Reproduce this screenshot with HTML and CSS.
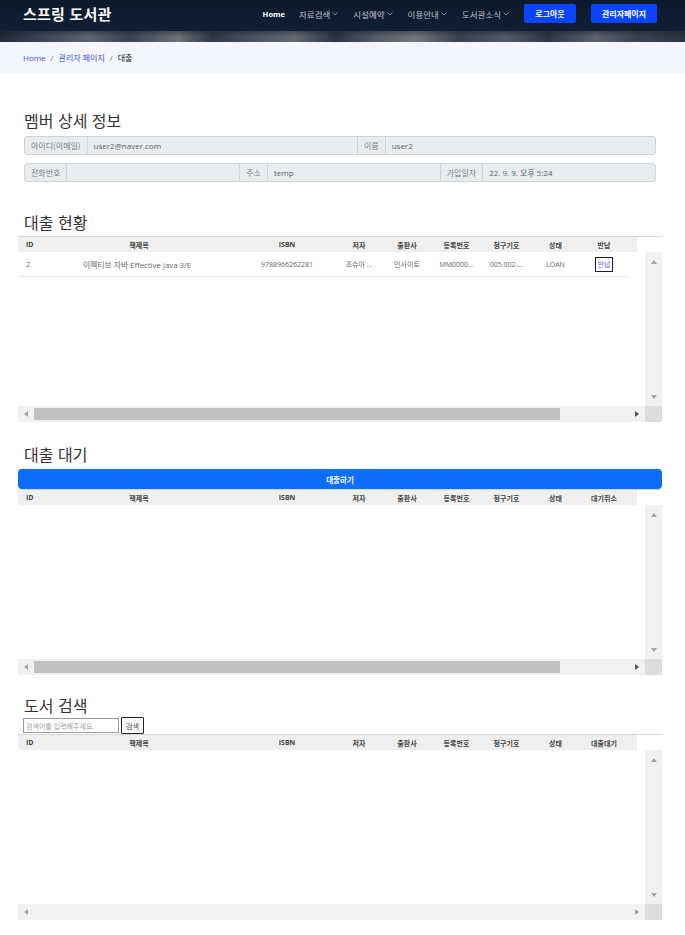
FILE: index.html
```html
<!DOCTYPE html>
<html lang="ko">
<head>
<meta charset="utf-8">
<title>스프링 도서관 - 대출</title>
<link rel="stylesheet" href="styles.css">
</head>
<body>
<header class="topbar">
  <div class="nav-main">
    <a class="logo" href="#">스프링 도서관</a>
    <nav class="menu">
      <a class="menu-item active" href="#">Home</a>
      <a class="menu-item" href="#">자료검색 <svg class="chev" viewBox="0 0 6 4"><polyline points="0.5,0.5 3,3 5.5,0.5"/></svg></a>
      <a class="menu-item" href="#">시설예약 <svg class="chev" viewBox="0 0 6 4"><polyline points="0.5,0.5 3,3 5.5,0.5"/></svg></a>
      <a class="menu-item" href="#">이용안내 <svg class="chev" viewBox="0 0 6 4"><polyline points="0.5,0.5 3,3 5.5,0.5"/></svg></a>
      <a class="menu-item" href="#">도서관소식 <svg class="chev" viewBox="0 0 6 4"><polyline points="0.5,0.5 3,3 5.5,0.5"/></svg></a>
      <a class="btn-nav btn-logout" href="#">로그아웃</a>
      <a class="btn-nav btn-admin" href="#">관리자페이지</a>
    </nav>
  </div>
  <div class="hero-strip"></div>
</header>

<section class="breadcrumbs">
  <a href="#">Home</a><span class="sep">/</span><a href="#">관리자 페이지</a><span class="sep">/</span><span class="current">대출</span>
</section>

<main class="content">
  <h2 class="sec-title">멤버 상세 정보</h2>
  <div class="igroup">
    <span class="ig-label">아이디(이메일)</span><span class="ig-value">user2@naver.com</span>
    <span class="ig-label">이름</span><span class="ig-value">user2</span>
  </div>
  <div class="igroup">
    <span class="ig-label">전화번호</span><span class="ig-value"></span>
    <span class="ig-label">주소</span><span class="ig-value">temp</span>
    <span class="ig-label">가입일자</span><span class="ig-value">22. 9. 9. 오후 5:24</span>
  </div>

  <h2 class="sec-title t-loan">대출 현황</h2>
  <div class="grid">
    <div class="grid-head">
      <div class="cols hrow">
        <span class="c-id">ID</span><span class="c-title">책제목</span><span class="c-isbn">ISBN</span><span>저자</span><span>출판사</span><span>등록번호</span><span>청구기호</span><span>상태</span><span>반납</span>
      </div>
    </div>
    <div class="grid-body">
      <div class="rows">
        <div class="cols brow">
          <span class="c-id">2</span><span class="c-title"><span class="clip">이펙티브 자바 Effective Java 3/E</span></span><span class="c-isbn">9788966262281</span><span>조슈아 ...</span><span>인사이트</span><span>MM0000...</span><span>005.002-...</span><span>LOAN</span><span><button class="btn-return">반납</button></span>
        </div>
      </div>
      <div class="vscroll"><span class="arr up"></span><span class="arr down"></span></div>
    </div>
    <div class="hscroll">
      <span class="harr"><span class="arr left"></span></span>
      <div class="track"><div class="thumb"></div></div>
      <span class="harr"><span class="arr right dark"></span></span>
      <span class="corner"></span>
    </div>
  </div>

  <h2 class="sec-title t-wait">대출 대기</h2>
  <button class="btn-loan">대출하기</button>
  <div class="grid">
    <div class="grid-head">
      <div class="cols hrow">
        <span class="c-id">ID</span><span class="c-title">책제목</span><span class="c-isbn">ISBN</span><span>저자</span><span>출판사</span><span>등록번호</span><span>청구기호</span><span>상태</span><span>대기취소</span>
      </div>
    </div>
    <div class="grid-body">
      <div class="rows"></div>
      <div class="vscroll"><span class="arr up"></span><span class="arr down"></span></div>
    </div>
    <div class="hscroll">
      <span class="harr"><span class="arr left"></span></span>
      <div class="track"><div class="thumb"></div></div>
      <span class="harr"><span class="arr right dark"></span></span>
      <span class="corner"></span>
    </div>
  </div>

  <h2 class="sec-title t-search">도서 검색</h2>
  <form class="search-row">
    <input class="search-input" type="text" placeholder="검색어를 입력해주세요.">
    <button class="search-btn" type="button">검색</button>
  </form>
  <div class="grid">
    <div class="grid-head">
      <div class="cols hrow">
        <span class="c-id">ID</span><span class="c-title">책제목</span><span class="c-isbn">ISBN</span><span>저자</span><span>출판사</span><span>등록번호</span><span>청구기호</span><span>상태</span><span>대출대기</span>
      </div>
    </div>
    <div class="grid-body">
      <div class="rows"></div>
      <div class="vscroll"><span class="arr up"></span><span class="arr down"></span></div>
    </div>
    <div class="hscroll">
      <span class="harr"><span class="arr left"></span></span>
      <div class="track"></div>
      <span class="harr"><span class="arr right"></span></span>
      <span class="corner"></span>
    </div>
  </div>
</main>
</body>
</html>
```

FILE: styles.css
```css
* { box-sizing: border-box; }

body {
  margin: 0;
  background: #fff;
  color: #444;
  font-family: "Open Sans", "Noto Sans CJK KR", sans-serif;
}

a { text-decoration: none; }

/* ---------- header ---------- */
.topbar {
  background: linear-gradient(180deg, #0d1a2c 0%, #11203a 100%);
}

.nav-main {
  height: 31px;
  padding: 0 28px 4px 23px;
  display: flex;
  align-items: center;
}

.logo {
  color: #fff;
  font-family: "Noto Sans CJK KR", sans-serif;
  font-weight: 700;
  font-size: 15px;
  letter-spacing: 0.2px;
}

.menu {
  margin-left: auto;
  display: flex;
  align-items: center;
}

.menu-item {
  display: flex;
  align-items: center;
  gap: 2px;
  margin-right: 15px;
  color: rgba(255, 255, 255, 0.72);
  font-family: "Noto Sans CJK KR", sans-serif;
  font-size: 8.5px;
}

.menu-item.active {
  color: #fff;
  font-family: "Open Sans", sans-serif;
  font-weight: 700;
  font-size: 7.6px;
  margin-right: 14px;
}

.chev {
  width: 6px;
  height: 4px;
  fill: none;
  stroke: rgba(255, 255, 255, 0.6);
  stroke-width: 0.8;
}

.btn-nav {
  height: 19px;
  display: flex;
  align-items: center;
  justify-content: center;
  background: #0b44ff;
  color: #fff;
  border-radius: 2px;
  font-family: "Noto Sans CJK KR", sans-serif;
  font-weight: 700;
  font-size: 8px;
}

.btn-logout { width: 52px; margin-left: 0; }
.btn-admin { width: 66px; margin-left: 15px; }

.hero-strip {
  height: 11px;
  background:
    linear-gradient(180deg, rgba(10, 20, 35, 0.35) 0%, rgba(10, 20, 35, 0) 60%),
    linear-gradient(90deg, #1f2a39 0%, #3b4656 6%, #5d6671 13%, #3a4555 19%, #6a727c 26%, #2f3a49 31%, #4c5663 37%, #626b75 43%, #2a3544 49%, #56606c 55%, #6f767f 61%, #394351 67%, #525c68 74%, #2d3846 80%, #5b646f 87%, #3a4452 93%, #2a3442 100%);
}

/* ---------- breadcrumbs ---------- */
.breadcrumbs {
  height: 31px;
  padding-left: 23px;
  display: flex;
  align-items: center;
  background: #f3f6fc;
  font-size: 8px;
}

.breadcrumbs a { color: #4154f1; }
.breadcrumbs .sep { color: #6c757d; margin: 0 5px; }
.breadcrumbs .current { color: #222; }

/* ---------- content ---------- */
.content {
  padding: 37px 23px 0 18px;
}

.sec-title {
  margin: 0 0 6px;
  padding-left: 6px;
  font-family: "Noto Sans CJK KR", sans-serif;
  font-weight: 400;
  font-size: 16px;
  line-height: 20px;
  color: #333;
}

.sec-title.t-loan { margin-top: 30px; margin-bottom: 4px; }
.sec-title.t-wait { margin-top: 22px; margin-bottom: 5px; }
.sec-title.t-search { margin-top: 20px; margin-bottom: 2px; }

/* input groups */
.igroup {
  margin: 0 6px;
  height: 19px;
  display: flex;
  border: 1px solid #ced4da;
  border-radius: 3px;
  background: #e9ecef;
  font-size: 8px;
}

.igroup + .igroup { margin-top: 8px; }

.ig-label,
.ig-value {
  display: flex;
  align-items: center;
  padding: 0 6px;
}

.ig-label + .ig-value,
.ig-value + .ig-label { border-left: 1px solid #ced4da; }

.ig-label { color: #7a7f85; font-family: "Noto Sans CJK KR", sans-serif; }
.ig-value { flex: 1; color: #5c636a; }

/* ---------- grid tables ---------- */
.grid {
  border-top: 1px solid #d7d7d7;
  font-size: 7px;
}

.cols {
  display: grid;
  grid-template-columns: 48px 146px 123px 48px 48px 51px 49px 49px 48px;
  width: 610px;
}

.cols > span {
  display: flex;
  align-items: center;
  justify-content: center;
  white-space: nowrap;
}

.cols > .c-id { justify-content: flex-start; padding-left: 8px; }
.cols > .c-isbn { padding-left: 27px; }
.cols > .c-title { padding: 0 17px; }

.grid-head .hrow {
  width: 619px;
  height: 15px;
  padding-right: 9px;
  grid-template-columns: 48px 146px 123px 48px 48px 51px 49px 49px 48px 9px;
  background: #efefef;
  color: #444;
  font-weight: 700;
}

.grid-body {
  height: 154px;
  display: flex;
}

.rows { flex: 1; }

.brow {
  height: 25px;
  border-bottom: 1px solid #e6e6e6;
  color: #666;
}

.brow .clip {
  display: block;
  overflow: hidden;
  width: 112px;
  text-align: left;
  font-size: 7.8px;
}

.btn-return {
  height: 15px;
  padding: 0 2px;
  border: 1px solid #222;
  border-radius: 0;
  background: #fff;
  color: #6a6aff;
  font-family: "Noto Sans CJK KR", sans-serif;
  font-size: 7px;
  box-shadow: inset 0 0 0 1px #fff;
}

.vscroll {
  width: 17px;
  background: #f1f1f1;
  display: flex;
  flex-direction: column;
  justify-content: space-between;
  align-items: center;
  padding: 8px 0 7px;
}

.hscroll {
  height: 16px;
  display: flex;
  background: #f1f1f1;
}

.harr {
  width: 16px;
  display: flex;
  align-items: center;
  justify-content: center;
}

.track {
  flex: 1;
  padding: 2px 0;
}

.thumb {
  width: 526px;
  height: 100%;
  background: #c1c1c1;
}

.corner {
  width: 17px;
  background: #dcdcdc;
}

.arr {
  width: 0;
  height: 0;
  border-style: solid;
  border-color: transparent;
}

.arr.up { border-width: 0 3.5px 4px; border-bottom-color: #a3a3a3; }
.arr.down { border-width: 4px 3.5px 0; border-top-color: #a3a3a3; }
.arr.left { border-width: 3.5px 4px 3.5px 0; border-right-color: #a3a3a3; }
.arr.right { border-width: 3.5px 0 3.5px 4px; border-left-color: #a3a3a3; }
.arr.right.dark { border-left-color: #505050; }

/* loan button */
.btn-loan {
  display: block;
  width: 100%;
  height: 20px;
  margin: 0;
  border: 0;
  border-radius: 4px;
  background: #0d6efd;
  color: #fff;
  font-family: "Noto Sans CJK KR", sans-serif;
  font-weight: 700;
  font-size: 7.5px;
}

/* search */
.search-row {
  margin: 0;
  height: 17px;
  padding-left: 5px;
  display: flex;
  align-items: center;
  gap: 2px;
}

.search-input {
  width: 96px;
  height: 15px;
  margin: 0;
  padding: 0 2px;
  border: 1px solid #9a9a9a;
  border-radius: 0;
  font-family: "Noto Sans CJK KR", sans-serif;
  font-size: 7px;
  color: #333;
}

.search-input::placeholder { color: #a0a0a0; }

.search-btn {
  width: 23px;
  height: 17px;
  margin: 0;
  padding: 0;
  border: 1px solid #222;
  border-radius: 1px;
  background: #f6f6f6;
  color: #555;
  font-family: "Noto Sans CJK KR", sans-serif;
  font-size: 7px;
  box-shadow: inset 0 0 0 1px #fff;
}
```
